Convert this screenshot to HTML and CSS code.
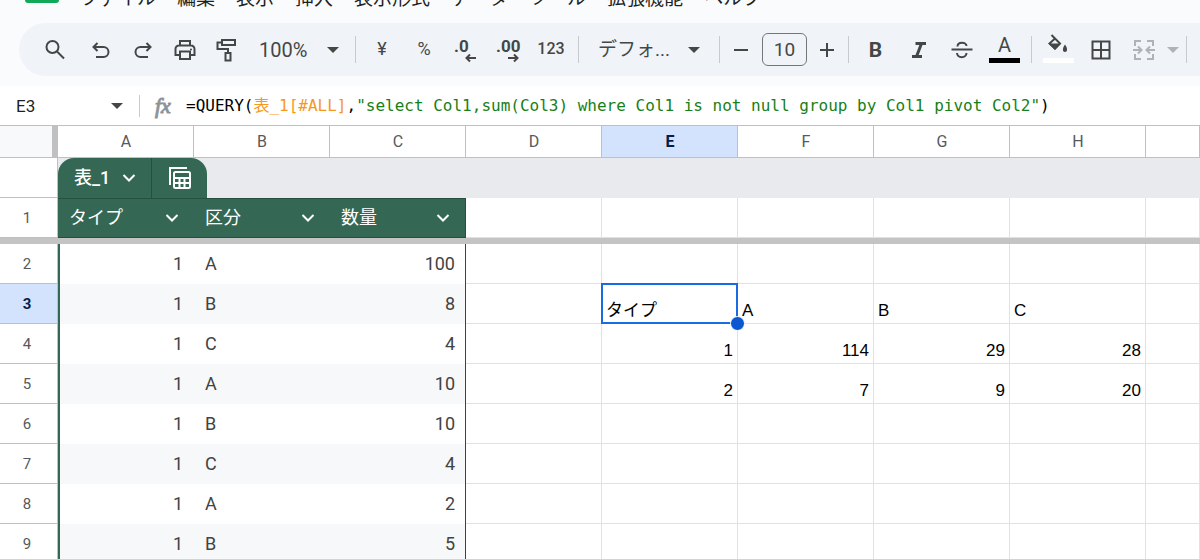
FILE: index.html
```html
<!DOCTYPE html>
<html lang="ja">
<head>
    <meta charset="UTF-8">
    <title>表_1</title>
    <link rel="stylesheet" href="styles.css">
</head>
<body>
<header class="top">
    <nav class="menubar">
        <span class="logo"></span>
        <button>ファイル</button>
        <button>編集</button>
        <button>表示</button>
        <button>挿入</button>
        <button>表示形式</button>
        <button>データ</button>
        <button>ツール</button>
        <button>拡張機能</button>
        <button>ヘルプ</button>
    </nav>
    <div class="toolbar">
        <button class="tool search" aria-label="検索"><svg width="24" height="24" viewBox="0 0 24 24"><circle cx="9.5" cy="9" r="6"/><path d="M14 13.500L21 20.500"/></svg></button>
        <button class="tool" aria-label="元に戻す"><svg width="24" height="24" viewBox="0 0 24 24"><path d="M8.500 5L4.500 9L8.500 13M4.500 9H14.500A5 5 0 0 1 14.500 19H7"/></svg></button>
        <button class="tool" aria-label="やり直し"><svg width="24" height="24" viewBox="0 0 24 24"><path d="M15.500 5L19.500 9L15.500 13M19.500 9H9.500A5 5 0 0 0 9.500 19H17"/></svg></button>
        <button class="tool" aria-label="印刷"><svg width="24" height="24" viewBox="0 0 24 24"><path d="M7 7.500V3H17V7.500M7 17H2.500V11A3.500 3.500 0 0 1 6 7.500H18A3.500 3.500 0 0 1 21.500 11V17H17M7 13.500H17V21H7Z"/><circle class="solid" cx="18" cy="11.500" r="1"/></svg></button>
        <button class="tool" aria-label="書式を貼り付け"><svg width="24" height="24" viewBox="0 0 24 24"><path d="M7 2H20V7H7ZM7 4.500H2.500V11H13V15M10.500 15H15.500V22.500H10.500Z"/></svg></button>
        <span class="pick zoom"><select aria-label="ズーム"><option>100%</option></select></span>
        <span class="sep"></span>
        <button class="tool small">¥</button>
        <button class="tool small">%</button>
        <button class="tool" aria-label="小数点以下の桁数を減らす"><svg width="28" height="28" viewBox="0 0 28 28"><text x="2" y="16">.0</text><path d="M24 22H15M18 18.500L14.500 22L18 25.500"/></svg></button>
        <button class="tool" aria-label="小数点以下の桁数を増やす"><svg width="28" height="28" viewBox="0 0 28 28"><text x="2" y="16">.00</text><path d="M14 22H23M20 18.500L23.500 22L20 25.500"/></svg></button>
        <button class="tool formats">123</button>
        <span class="sep"></span>
        <span class="pick font"><select aria-label="フォント"><option>デフォ...</option></select></span>
        <span class="sep"></span>
        <button class="tool step" aria-label="縮小"><svg width="18" height="18" viewBox="0 0 18 18"><path d="M2 9H16"/></svg></button>
        <input class="size" type="text" value="10" aria-label="フォントサイズ">
        <button class="tool step" aria-label="拡大"><svg width="18" height="18" viewBox="0 0 18 18"><path d="M2 9H16M9 2V16"/></svg></button>
        <span class="sep"></span>
        <button class="tool wide bold">B</button>
        <button class="tool wide" aria-label="斜体"><svg width="24" height="24" viewBox="0 0 24 24"><path class="heavy" d="M8.500 5.500H19M5 18.500H15M14.500 5.500L9.500 18.500"/></svg></button>
        <button class="tool wide" aria-label="取り消し線"><svg width="24" height="24" viewBox="0 0 24 24"><path d="M1.500 11.500H22.500M7.500 8.500C7.500 3.500 16.500 3.500 16.500 8M7 15C7.500 20.500 16.500 20.500 16.500 15"/></svg></button>
        <button class="tool wide color">A<span class="swatch black"></span></button>
        <span class="sep"></span>
        <button class="tool color" aria-label="塗りつぶしの色"><svg width="24" height="22" viewBox="0 0 24 22"><path d="M5.500 1L14 9.500L9 14.500L3.500 9.500L9 4.500"/><path class="solid" d="M2.500 9.500H15L9 16ZM19 10.500C16 14.500 16.500 18 19 18S22 14.500 19 10.500Z"/></svg><span class="swatch white"></span></button>
        <button class="tool wide" aria-label="枠線"><svg width="24" height="24" viewBox="0 0 24 24"><path d="M3.500 3.500H20.500V20.500H3.500ZM12 3.500V20.500M3.500 12H20.500"/></svg></button>
        <button class="tool wide off" aria-label="セルを結合"><svg width="24" height="24" viewBox="0 0 24 24"><path d="M9 3H3V8M3 16V21H9M15 3H21V8M21 16V21H15M1 12H9M6 8.500L9.500 12L6 15.500M23 12H15M18 8.500L14.500 12L18 15.500"/></svg></button>
        <button class="tool off arrow" aria-label="結合の種類"></button>
        <span class="sep"></span>
        <button class="tool off" aria-label="配置"><svg width="24" height="24" viewBox="0 0 24 24"><path d="M1 4H20M1 9H14M1 14H20M1 19H14"/></svg></button>
    </div>
</header>
<div class="formula-bar">
    <span class="pick name"><input type="text" value="E3" aria-label="名前ボックス"></span>
    <span class="fx">fx</span>
    <code class="formula" role="textbox" aria-label="数式">=QUERY(<span class="range">表_1[#ALL]</span>,<span class="string">"select Col1,sum(Col3) where Col1 is not null group by Col1 pivot Col2"</span>)</code>
</div>
<main class="sheet">
    <table class="grid">
        <colgroup>
            <col class="col-head">
            <col class="col"><col class="col"><col class="col"><col class="col">
            <col class="col"><col class="col"><col class="col"><col class="col">
            <col>
        </colgroup>
        <thead>
        <tr class="letters"><th class="corner"></th><th>A</th><th>B</th><th>C</th><th>D</th><th class="active">E</th><th>F</th><th>G</th><th>H</th><th></th></tr>
        <tr class="tab-row">
            <th class="num"></th>
            <td colspan="9">
                <div class="tab">
                    <button class="tab-name">表_1<svg width="16" height="16" viewBox="0 0 16 16"><path d="M2.500 5L8 10.500L13.500 5"/></svg></button>
                    <button class="tab-view" aria-label="テーブルビュー"><svg width="24" height="24" viewBox="0 0 24 24"><path d="M2 19V2H19"/><rect x="6" y="6" width="16" height="16" rx="1.500"/><path d="M6 12H22M6 17H22M11.500 12V22M16.500 12V22"/></svg></button>
                </div>
            </td>
        </tr>
        <tr class="fields">
            <th class="num">1</th>
            <td class="field"><div>タイプ<button aria-label="タイプ"><svg width="16" height="16" viewBox="0 0 16 16"><path d="M2.500 5L8 10.500L13.500 5"/></svg></button></div></td>
            <td class="field"><div>区分<button aria-label="区分"><svg width="16" height="16" viewBox="0 0 16 16"><path d="M2.500 5L8 10.500L13.500 5"/></svg></button></div></td>
            <td class="field last"><div>数量<button aria-label="数量"><svg width="16" height="16" viewBox="0 0 16 16"><path d="M2.500 5L8 10.500L13.500 5"/></svg></button></div></td>
            <td></td><td></td><td></td><td></td><td></td><td></td>
        </tr>
        <tr class="freeze"><td colspan="10"></td></tr>
        </thead>
        <tbody>
        <tr><th class="num">2</th><td class="type">1</td><td class="kind">A</td><td class="qty">100</td><td></td><td></td><td></td><td></td><td></td><td></td></tr>
        <tr><th class="num active">3</th><td class="type">1</td><td class="kind">B</td><td class="qty">8</td><td></td><td class="selected">タイプ</td><td>A</td><td>B</td><td>C</td><td></td></tr>
        <tr><th class="num">4</th><td class="type">1</td><td class="kind">C</td><td class="qty">4</td><td></td><td class="n">1</td><td class="n">114</td><td class="n">29</td><td class="n">28</td><td></td></tr>
        <tr><th class="num">5</th><td class="type">1</td><td class="kind">A</td><td class="qty">10</td><td></td><td class="n">2</td><td class="n">7</td><td class="n">9</td><td class="n">20</td><td></td></tr>
        <tr><th class="num">6</th><td class="type">1</td><td class="kind">B</td><td class="qty">10</td><td></td><td></td><td></td><td></td><td></td><td></td></tr>
        <tr><th class="num">7</th><td class="type">1</td><td class="kind">C</td><td class="qty">4</td><td></td><td></td><td></td><td></td><td></td><td></td></tr>
        <tr><th class="num">8</th><td class="type">1</td><td class="kind">A</td><td class="qty">2</td><td></td><td></td><td></td><td></td><td></td><td></td></tr>
        <tr><th class="num">9</th><td class="type">1</td><td class="kind">B</td><td class="qty">5</td><td></td><td></td><td></td><td></td><td></td><td></td></tr>
        </tbody>
    </table>
</main>
</body>
</html>
```
FILE: styles.css
```css
*{
    box-sizing: border-box;
}
body{
    margin: 0;
    height: 100vh;
    overflow: hidden;
    background: #fff;
    font-family: Roboto, "Noto Sans CJK JP", sans-serif;
    color: #444746;
}
button, input, select{
    margin: 0;
    padding: 0;
    border: 0;
    background: none;
    font: inherit;
    color: inherit;
}
svg{
    display: block;
    fill: none;
    stroke: currentColor;
    stroke-width: 2;
}
svg .solid{
    fill: currentColor;
    stroke: none;
}
svg .heavy{
    stroke-width: 3;
}
svg text{
    fill: currentColor;
    stroke: none;
    font-size: 17px;
    font-weight: 700;
}

/* menu */
.top{
    background: #f9fbfd;
    padding-bottom: 10px;
    overflow: hidden;
}
.menubar{
    display: flex;
    gap: 21px;
    height: 24px;
    margin-top: -13px;
    padding-left: 25px;
    font-size: 19px;
    line-height: 24px;
    color: #1f1f1f;
    white-space: nowrap;
}
.logo{
    width: 34px;
    height: 16px;
    border-radius: 0 0 3px 3px;
    background: #0fa958;
}

/* toolbar */
.toolbar{
    display: flex;
    align-items: center;
    height: 53px;
    margin: 12px 0 0 19px;
    padding-left: 15px;
    border-radius: 27px 0 0 27px;
    background: #f0f4f9;
    overflow: hidden;
}
.tool{
    flex: none;
    display: flex;
    align-items: center;
    justify-content: center;
    width: 42px;
    height: 40px;
}
.search{
    margin-right: 4px;
}
.wide{
    width: 43px;
}
.step{
    width: 32px;
}
.small{
    font-size: 18px;
    padding-bottom: 3px;
}
.formats{
    width: 44px;
    font-size: 16px;
    font-weight: 500;
    padding-bottom: 3px;
}
.bold{
    font-size: 21px;
    font-weight: 700;
}
.off{
    color: #afb3b8;
}
.color{
    flex-direction: column;
    justify-content: flex-end;
    padding-bottom: 7px;
    font-size: 20px;
    line-height: 22px;
}
.swatch{
    width: 31px;
    height: 5px;
    margin-top: 2px;
}
.black{
    background: #000;
}
.white{
    background: #fff;
}
.sep{
    flex: none;
    width: 1px;
    height: 27px;
    margin: 0 5px;
    background: #c7cacf;
}
.pick{
    flex: none;
    display: flex;
    align-items: center;
    justify-content: space-between;
}
.pick select, .pick input{
    appearance: none;
    flex: 1;
    min-width: 0;
    outline: 0;
}
.pick::after, .arrow::after{
    content: "";
    border: 6px solid transparent;
    border-top-color: currentColor;
    border-bottom: 0;
}
.zoom{
    width: 102px;
    padding: 0 11px;
    font-size: 20px;
}
.font{
    width: 130px;
    padding: 0 14px;
    font-size: 19px;
}
.arrow{
    width: 16px;
}
.size{
    flex: none;
    width: 45px;
    height: 33px;
    margin: 0 4px 0 5px;
    border: 1px solid #747775;
    border-radius: 6px;
    font-size: 19px;
    text-align: center;
}

/* formula bar */
.formula-bar{
    display: flex;
    align-items: center;
    height: 39px;
    white-space: nowrap;
}
.name{
    width: 140px;
    height: 22px;
    padding: 0 16px;
    border-right: 1px solid #c7cacf;
    font-size: 17px;
}
.name input{
    color: #1f1f1f;
}
.fx{
    width: 46px;
    padding-left: 15px;
    font: italic 22px/24px "Liberation Serif", serif;
    -webkit-text-stroke: 1px #8f9396;
    color: #8f9396;
}
.formula{
    font: 16px/24px "DejaVu Sans Mono", "Noto Sans CJK JP", monospace;
    color: #000;
}
.range{
    color: #f7981d;
}
.string{
    color: #188018;
}

/* grid */
.grid{
    width: 100%;
    table-layout: fixed;
    border-collapse: separate;
    border-spacing: 0;
    border-top: 1px solid #c0c0c0;
}
.col-head{
    width: 58px;
}
.col{
    width: 136px;
}
.grid th, .grid td{
    height: 40px;
    padding: 0;
    border-right: 1px solid #e1e1e1;
    border-bottom: 1px solid #e1e1e1;
}
.grid td{
    padding: 0 4px 2px;
    vertical-align: bottom;
    font: 17px/20px "Liberation Sans", "Noto Sans CJK JP", sans-serif;
    color: #000;
}
.grid th{
    border-color: #c0c0c0;
    font-size: 15px;
    font-weight: 400;
    color: #575a5a;
}
.grid .letters th{
    height: 32px;
    padding-left: 1px;
    font-size: 16px;
}
.grid th.active{
    background: #d3e3fd;
    font-weight: 700;
    color: #041e49;
}
.grid .corner{
    background: #f8f9fa;
    border-right: 6px solid #c0c0c0;
}
.grid .num{
    padding-right: 3px;
}
.grid .tab-row td{
    padding: 0;
    border: 0;
    background: #e8eaed;
}
.tab{
    display: flex;
    width: 149px;
    height: 40px;
    border-radius: 16px 16px 0 0;
    background: #356854;
    color: #fff;
}
.tab-name{
    display: flex;
    align-items: center;
    justify-content: space-between;
    width: 94px;
    padding: 0 14px 0 16px;
    border-right: 1px solid #284e3f;
    font: 500 18px/24px Roboto, "Noto Sans CJK JP", sans-serif;
}
.tab-view{
    flex: 1;
    display: flex;
    align-items: center;
    justify-content: center;
}
.grid .field{
    padding: 0 14px 0 11px;
    vertical-align: middle;
    border: solid #284e3f;
    border-width: 1px 0;
    background: #356854;
    font: 18px/24px Roboto, "Noto Sans CJK JP", sans-serif;
    color: #fff;
}
.field div{
    display: flex;
    align-items: center;
    justify-content: space-between;
}
.grid .last{
    border-right-width: 1px;
}
.grid .freeze td{
    height: 6px;
    padding: 0;
    border: 0;
    background: #c4c4c4;
    line-height: 0;
}
.grid .type, .grid .kind, .grid .qty{
    padding: 0 11px;
    border: 0;
    vertical-align: middle;
    font: 18px/24px Roboto, sans-serif;
    color: #434343;
}
.grid .type{
    border-left: 2px solid #356854;
    text-align: right;
}
.grid .qty{
    padding-right: 10px;
    border-right: 1px solid #284e3f;
    text-align: right;
}
tbody tr:nth-child(even) .type, tbody tr:nth-child(even) .kind, tbody tr:nth-child(even) .qty{
    background: #f6f8f9;
}
.grid .n{
    text-align: right;
}
.selected{
    position: relative;
}
.selected::before{
    content: "";
    position: absolute;
    inset: -1px;
    border: 2px solid #1a6be0;
}
.selected::after{
    content: "";
    position: absolute;
    z-index: 1;
    right: -8px;
    bottom: -8px;
    width: 13px;
    height: 13px;
    border: 1px solid #fff;
    border-radius: 50%;
    background: #0b57d0;
}
```
